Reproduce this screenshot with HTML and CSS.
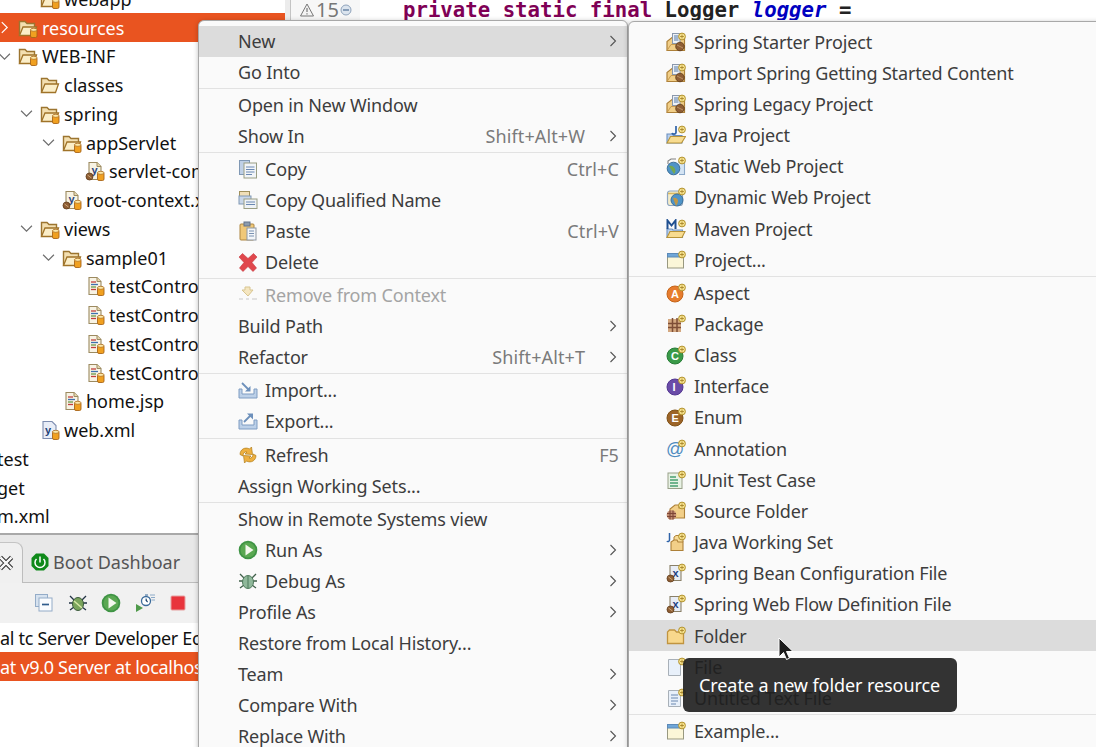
FILE: index.html
```html
<!DOCTYPE html>
<html lang="en">
<head>
  <meta charset="UTF-8">
  <title>Eclipse context menu</title>
  <link rel="stylesheet" href="styles.css">
</head>
<body>
  <!-- icon sprite -->
  <svg class="sprite" xmlns="http://www.w3.org/2000/svg">
    <defs>
      <g id="jar"><rect x="12.5" y="11" width="6.500" height="8.500" rx="1.5" fill="#f0a020" stroke="#a8651a" stroke-width=".9"/><ellipse cx="15.750" cy="11.800" rx="3.200" ry="1.500" fill="#fde9a8" stroke="#a8651a" stroke-width=".7"/></g>
      <g id="star"><circle cx="16" cy="4.5" r="3.4" fill="#f8e490" stroke="#b0902c" stroke-width="1"/><path d="M16 2.600v3.800M14.100 4.500h3.800" stroke="#a8862a" stroke-width=".9"/></g>
      <g id="bean"><circle cx="4.5" cy="15.5" r="3.500" fill="#8f5e34" stroke="#5e3a18" stroke-width=".8"/><path d="M2.500 14l4 3" stroke="#d8b888" stroke-width=".8"/></g>
      <g id="page"><path d="M4 1.5h8l4 4v13H4z" fill="#f8f3e4" stroke="#9c8a60" stroke-width="1.100"/><path d="M12 1.5v4h4" fill="#e6d8b0" stroke="#9c8a60"/></g>
    </defs>
    <symbol id="i-fopen" viewBox="0 0 20 20"><path d="M1.500 17.500V3.500h5.500l2 2h7.500V9" fill="#f3dfb0" stroke="#9c7530" stroke-width="1.400"/><path d="M1.500 17.500l3.500-8.500h13.500l-3 8.500z" fill="#fbeec8" stroke="#a07328" stroke-width="1.300"/></symbol>
    <symbol id="i-fopen-jar" viewBox="0 0 20 20"><use href="#i-fopen"/><use href="#jar"/></symbol>
    <symbol id="i-sxml" viewBox="0 0 20 20"><use href="#page"/><text x="6.500" y="13" class="ico-text" fill="#2b4580">y</text><use href="#bean"/><use href="#jar"/></symbol>
    <symbol id="i-jsp" viewBox="0 0 20 20"><use href="#page"/><path d="M6 6h5" stroke="#c0403d" stroke-width="1.300"/><path d="M6 8.500h7" stroke="#3f71b0" stroke-width="1.300"/><path d="M6 11h5" stroke="#6a9a4a" stroke-width="1.300"/><path d="M6 13.500h5" stroke="#c0403d" stroke-width="1.300"/><use href="#jar"/></symbol>
    <symbol id="i-xml" viewBox="0 0 20 20"><path d="M3 1.500h9l4 4v13H3z" fill="#e8edf7" stroke="#7d8db0" stroke-width="1.100"/><text x="5" y="14" class="ico-text" fill="#203f78">y</text><use href="#jar"/></symbol>

    <symbol id="i-copy" viewBox="0 0 20 20"><rect x="1.500" y="1.500" width="10" height="14" fill="#bfd0e6" stroke="#8098b4"/><rect x="6" y="4" width="12.500" height="15" fill="#f2f5f8" stroke="#9a9e84"/><path d="M8 8h8.500M8 10.500h8.500M8 13h8.500M8 15.500h6" stroke="#6a88b2"/></symbol>
    <symbol id="i-copyq" viewBox="0 0 20 20"><rect x="1.500" y="1.500" width="10" height="8" fill="#f0dfb8" stroke="#a0905c"/><rect x="1" y="6" width="12" height="8" fill="#c8d6e8" stroke="#8098b4"/><rect x="6" y="9" width="13" height="9.500" fill="#eef2f6" stroke="#9a9e84"/><path d="M8 12h9M8 14.500h9" stroke="#6a88b2"/></symbol>
    <symbol id="i-paste" viewBox="0 0 20 20"><rect x="2" y="3" width="14" height="16" rx="1" fill="#f0c878" stroke="#ae8640"/><rect x="6" y="1" width="6" height="4" fill="#8c9cae" stroke="#63738a"/><rect x="9" y="7" width="9" height="12" fill="#f3f6f9" stroke="#8e98a4"/><path d="M11 10h5M11 12.500h5M11 15h5" stroke="#7a92b2"/></symbol>
    <symbol id="i-delete" viewBox="0 0 20 20"><path d="M4.500 1.500L10 6.500l5.500-5L19 5 14 10.500 18.500 16 15 19.500 10 14.500l-5 5L1.500 16 6 10.500 1 5z" fill="#e0474c" stroke="#c6393f" stroke-width=".6"/></symbol>
    <symbol id="i-remove" viewBox="0 0 20 20"><path d="M7 2h5v3h3l-5 6-6-6h3z" fill="#f5e6c0" stroke="#d8c590"/><path d="M1 14h4M8 14h3M14 14h5" stroke="#c8c8c8" stroke-width="1.200"/></symbol>
    <symbol id="i-import" viewBox="0 0 20 20"><path d="M1 9h3v5h12V9h3v9H1z" fill="#bcd0e8" stroke="#7f9cc2"/><path d="M4 3l7 7" stroke="#6d90bb" stroke-width="1.800"/><path d="M12.500 6v5.500H7z" fill="#6d90bb"/></symbol>
    <symbol id="i-export" viewBox="0 0 20 20"><path d="M1 9h3v5h12V9h3v9H1z" fill="#bcd0e8" stroke="#7f9cc2"/><path d="M6 11l7-7" stroke="#6d90bb" stroke-width="1.800"/><path d="M9 2.500h6v6z" fill="#6d90bb"/></symbol>
    <symbol id="i-refresh" viewBox="0 0 20 20"><path d="M2 9.500c0-5 5-8 9.500-5.500l2-2 1 7.500-7.500-.500 2-2c-2.500-.500-4 1-4 4z" fill="#eeb040" stroke="#b07c18" stroke-width=".7"/><path d="M18 10.500c0 5-5 8-9.500 5.500l-2 2-1-7.500 7.500.500-2 2c2.500.500 4-1 4-4z" fill="#eeb040" stroke="#b07c18" stroke-width=".7"/></symbol>
    <symbol id="i-run" viewBox="0 0 20 20"><circle cx="10" cy="10" r="9.300" fill="#3f9445"/><circle cx="10" cy="10" r="7.500" fill="#5aa852"/><path d="M7.500 4.500l8 5.500-8 5.500z" fill="#f4f8ee"/></symbol>
    <symbol id="i-debug" viewBox="0 0 20 20"><path d="M2 3l4 4M18 3l-4 4M1 10h4M19 10h-4M2 17l4-3M18 17l-4-3" stroke="#40604a" stroke-width="1.300"/><ellipse cx="10" cy="11" rx="5.500" ry="6.500" fill="#8fb89a" stroke="#4f7a5c"/><path d="M10 5v12" stroke="#4f7a5c"/></symbol>
    <symbol id="i-debug2" viewBox="0 0 20 20"><path d="M2 3l4 4M18 3l-4 4M1 10h4M19 10h-4M2 17l4-3M18 17l-4-3" stroke="#234" stroke-width="1.300"/><ellipse cx="10" cy="11" rx="5.500" ry="6.500" fill="#7aa45c" stroke="#3a5a3c"/><path d="M6 8l8 7" stroke="#d8e8a8" stroke-width="1.500"/></symbol>
    <symbol id="i-profile" viewBox="0 0 20 20"><circle cx="11" cy="8" r="4.500" fill="#fff" stroke="#3b6b9b" stroke-width="1.300"/><path d="M11 5.500V8l2 1M10 2h3" stroke="#3b6b9b"/><path d="M1 11l7 4-7 4z" fill="#4f9a4a"/><path d="M15 2h5M16 4.500h4M16.500 7H20" stroke="#8caac8"/></symbol>
    <symbol id="i-stop" viewBox="0 0 20 20"><rect x="3" y="3" width="14" height="14" rx="1" fill="#e8343c" stroke="#e6a0a0"/></symbol>
    <symbol id="i-collapse" viewBox="0 0 20 20"><rect x="1.500" y="1.500" width="12" height="12" fill="#d6e2ef" stroke="#94acc8"/><rect x="5" y="5" width="13" height="13" fill="#fafcfe" stroke="#94acc8"/><path d="M8 11.500h7" stroke="#2f5c8c" stroke-width="1.700"/></symbol>
    <symbol id="i-boot" viewBox="0 0 20 20"><path d="M6 1.500h8l4.500 4.500v8L14 18.500H6L1.500 14V6z" fill="#0f8a1a"/><path d="M6.500 7a5 5 0 1 0 7 0" fill="none" stroke="#fff" stroke-width="1.500"/><path d="M10 4.500v6" stroke="#fff" stroke-width="1.500"/></symbol>
    <symbol id="i-close" viewBox="0 0 20 20"><path d="M3 3l14 14M17 3L3 17" stroke="#2a2a2a" stroke-width="5.500"/><path d="M3 3l14 14M17 3L3 17" stroke="#f8f8f8" stroke-width="3"/></symbol>

    <symbol id="n-spring" viewBox="0 0 20 20"><path d="M1 18.500V9.500l5-4h12.500v13z" fill="#f2cf88" stroke="#ad8038" stroke-width="1.200"/><path d="M1 18.500l4-6h14" fill="none" stroke="#c79a50"/><rect x="6.500" y="1.500" width="7.500" height="10" fill="#eef1f6" stroke="#8a98ac"/><path d="M8 4h4.500M8 6h4.500M8 8h4.500" stroke="#557aa8"/><circle cx="14" cy="14.500" r="4.300" fill="#8f5e34" stroke="#5e3a18" stroke-width=".8"/><path d="M11 13l6 3" stroke="#c8a070" stroke-width=".8"/><use href="#star"/></symbol>
    <symbol id="n-java" viewBox="0 0 20 20"><path d="M1 18V9h5l1.500 1.500H16V18z" fill="#b8d0ee" stroke="#6c90c0" stroke-width="1.100"/><path d="M1 18l3.500-6.500h15L15.500 18z" fill="#f8dc90" stroke="#b89438" stroke-width="1.100"/><path d="M10 1v6.500c0 2-3.500 2-4 .5" fill="none" stroke="#2e62a8" stroke-width="1.700"/><use href="#star"/></symbol>
    <symbol id="n-static" viewBox="0 0 20 20"><path d="M2 8V5l3-2h5" fill="none" stroke="#808080" stroke-width="1.100"/><path d="M12 6h6.500v12.500H13" fill="#d4e4f4" stroke="#8aa8c8" stroke-width="1.100"/><circle cx="7.500" cy="12.500" r="6.300" fill="#4f94c8" stroke="#3c6f98"/><path d="M3 10c3-1 5 1 6 3 1 2 0 4-1 5" fill="#74a850"/><use href="#star"/></symbol>
    <symbol id="n-dynamic" viewBox="0 0 20 20"><rect x="1.500" y="4" width="15" height="14.500" rx="2.500" fill="#f4ecc8" stroke="#8ea6c2" stroke-width="1.200"/><path d="M2 6.500h12" stroke="#d8b860" stroke-width="1.500"/><circle cx="11" cy="13" r="6" fill="#4f94c8" stroke="#3c6f98"/><path d="M7 11c3-1 5 1 5 3s-1 3-2 5" fill="#c09848"/><use href="#star"/></symbol>
    <symbol id="n-maven" viewBox="0 0 20 20"><path d="M1 18.500V10h5l1 1h9.500v7.500z" fill="#b8d0ee" stroke="#6c90c0" stroke-width="1.100"/><path d="M1 18.500l3-6h15l-3 6z" fill="#f8dc90" stroke="#b89438" stroke-width="1.100"/><path d="M1.500 10V1.500l4 5 4-5V10" fill="none" stroke="#1f4f90" stroke-width="2"/><use href="#star"/></symbol>
    <symbol id="n-project" viewBox="0 0 20 20"><rect x="1.500" y="3.500" width="16" height="14.500" fill="#fbf6d8" stroke="#989880"/><rect x="1.500" y="3.500" width="16" height="3.500" fill="#6fa6d8" stroke="#5c8ab8"/><use href="#star"/></symbol>
    <symbol id="n-aspect" viewBox="0 0 20 20"><circle cx="9" cy="11" r="8" fill="#e67c2e" stroke="#c46418"/><text x="5" y="15" class="ico-text" fill="#fff">A</text><use href="#star"/></symbol>
    <symbol id="n-package" viewBox="0 0 20 20"><path d="M2 5h13v13H2z" fill="#d4a880"/><path d="M2 9.500h13M2 13.500h13M6.500 4v14M11 4v14" stroke="#7e4e36" stroke-width="1.500"/><use href="#star"/></symbol>
    <symbol id="n-class" viewBox="0 0 20 20"><circle cx="9" cy="11" r="8" fill="#3a9a48" stroke="#287c36"/><text x="5" y="15" class="ico-text" fill="#fff">C</text><use href="#star"/></symbol>
    <symbol id="n-interface" viewBox="0 0 20 20"><circle cx="9" cy="11" r="8" fill="#6a4ca8" stroke="#523690"/><text x="6.500" y="15" class="ico-text" fill="#fff">I</text><use href="#star"/></symbol>
    <symbol id="n-enum" viewBox="0 0 20 20"><circle cx="9" cy="11" r="8" fill="#9c6428" stroke="#805014"/><text x="5.500" y="15" class="ico-text" fill="#fff">E</text><use href="#star"/></symbol>
    <symbol id="n-annotation" viewBox="0 0 20 20"><text x="0" y="16" class="ico-at" fill="#4f8cc0">@</text><use href="#star"/></symbol>
    <symbol id="n-junit" viewBox="0 0 20 20"><rect x="2" y="3" width="14" height="15.500" fill="#e8f2e4" stroke="#98a088"/><path d="M4 7h6M4 10h8M4 13h8M4 16h8" stroke="#48a070" stroke-width="1.400"/><use href="#star"/></symbol>
    <symbol id="n-source" viewBox="0 0 20 20"><path d="M4 17V8l5-4h4v3h5.500v10z" fill="#f2cf88" stroke="#ad8038" stroke-width="1.100"/><circle cx="5.500" cy="14" r="4.800" fill="#c08c70"/><path d="M1 12.500h9M1 15.500h9M4 9.500v9M7 9.500v9" stroke="#7e4636" stroke-width="1.100"/><use href="#star"/></symbol>
    <symbol id="n-jws" viewBox="0 0 20 20"><path d="M3.500 1v7c0 1.500-2 2-2.500 1" fill="none" stroke="#2e62a8" stroke-width="1.500"/><path d="M8 10V5l2-1.500h3l1 1.500h3v5" fill="#f8dc98" stroke="#ad8038"/><path d="M5 18.500V10l3-2h3l1 2h5v8.500z" fill="#f2cf88" stroke="#ad8038" stroke-width="1.100"/><use href="#star"/></symbol>
    <symbol id="n-bean" viewBox="0 0 20 20"><path d="M4 2.500h11v15H4z" fill="#e8edf6" stroke="#8a8068" stroke-width="1.100"/><text x="6.500" y="14" class="ico-text" fill="#1f4080">x</text><use href="#bean"/><use href="#star"/></symbol>
    <symbol id="n-folder" viewBox="0 0 20 20"><path d="M1.500 17.500V6l2-2h5l2 2h7v11.500z" fill="#f8d88c" stroke="#c09440" stroke-width="1.300"/><use href="#star"/></symbol>
    <symbol id="n-file" viewBox="0 0 20 20"><path d="M2.500 2.500h12v16h-12z" fill="#e8f0fa" stroke="#a8b0b8"/><use href="#star"/></symbol>
    <symbol id="n-text" viewBox="0 0 20 20"><path d="M2.500 2.500h12v16h-12z" fill="#e8f0fa" stroke="#a8b0b8"/><path d="M5 7h7M5 10h7M5 13h7M5 16h5" stroke="#6a88b0"/><use href="#star"/></symbol>

    <symbol id="chev-down" viewBox="0 0 12 12"><path d="M1 3.500l5 5 5-5" fill="none" stroke="#6e6e6e" stroke-width="1.100"/></symbol>
    <symbol id="chev-right" viewBox="0 0 12 12"><path d="M3.500 1l5 5-5 5" fill="none" stroke="currentColor" stroke-width="1.100"/></symbol>
  </svg>

  <div class="app">
    <div class="side">
      <div class="tree">
        <div class="tree-list">
          <div class="tree-row lv1"><svg class="ico"><use href="#i-fopen-jar"/></svg>webapp</div>
          <div class="tree-row lv0 selected"><svg class="twist"><use href="#chev-right"/></svg><svg class="ico"><use href="#i-fopen-jar"/></svg>resources</div>
          <div class="tree-row lv0"><svg class="twist"><use href="#chev-down"/></svg><svg class="ico"><use href="#i-fopen-jar"/></svg>WEB-INF</div>
          <div class="tree-row lv1"><svg class="ico"><use href="#i-fopen"/></svg>classes</div>
          <div class="tree-row lv1"><svg class="twist"><use href="#chev-down"/></svg><svg class="ico"><use href="#i-fopen-jar"/></svg>spring</div>
          <div class="tree-row lv2"><svg class="twist"><use href="#chev-down"/></svg><svg class="ico"><use href="#i-fopen-jar"/></svg>appServlet</div>
          <div class="tree-row lv3"><svg class="ico"><use href="#i-sxml"/></svg>servlet-con</div>
          <div class="tree-row lv2"><svg class="ico"><use href="#i-sxml"/></svg>root-context.x</div>
          <div class="tree-row lv1"><svg class="twist"><use href="#chev-down"/></svg><svg class="ico"><use href="#i-fopen-jar"/></svg>views</div>
          <div class="tree-row lv2"><svg class="twist"><use href="#chev-down"/></svg><svg class="ico"><use href="#i-fopen-jar"/></svg>sample01</div>
          <div class="tree-row lv3"><svg class="ico"><use href="#i-jsp"/></svg>testContro</div>
          <div class="tree-row lv3"><svg class="ico"><use href="#i-jsp"/></svg>testContro</div>
          <div class="tree-row lv3"><svg class="ico"><use href="#i-jsp"/></svg>testContro</div>
          <div class="tree-row lv3"><svg class="ico"><use href="#i-jsp"/></svg>testContro</div>
          <div class="tree-row lv2"><svg class="ico"><use href="#i-jsp"/></svg>home.jsp</div>
          <div class="tree-row lv1"><svg class="ico"><use href="#i-xml"/></svg>web.xml</div>
          <div class="tree-row clipped">test</div>
          <div class="tree-row clipped">get</div>
          <div class="tree-row clipped">m.xml</div>
        </div>
      </div>

      <div class="tabbar">
        <div class="tab-active"><svg class="tab-close"><use href="#i-close"/></svg></div>
        <div class="tab"><svg class="ico"><use href="#i-boot"/></svg>Boot Dashboar</div>
      </div>
      <div class="toolbar">
        <svg class="ico"><use href="#i-collapse"/></svg>
        <svg class="ico"><use href="#i-debug2"/></svg>
        <svg class="ico"><use href="#i-run"/></svg>
        <svg class="ico"><use href="#i-profile"/></svg>
        <svg class="ico"><use href="#i-stop"/></svg>
      </div>
      <div class="servers">
        <div class="server-row">al tc Server Developer Ec</div>
        <div class="server-row selected">at v9.0 Server at localhos</div>
      </div>
    </div>

    <div class="editor">
      <div class="gutter">
        <svg class="warn" viewBox="0 0 14 14"><path d="M7 1L13.500 13H.5z" fill="#f4f4f4" stroke="#777"/><path d="M7 5v4M7 10.200v1.200" stroke="#777" stroke-width="1.200"/></svg>
        <span class="line-no">15</span>
        <svg class="fold" viewBox="0 0 12 12"><circle cx="6" cy="6" r="5" fill="#dbe4ee" stroke="#8fa3bb"/><path d="M3 6h6" stroke="#4e6f94" stroke-width="1.200"/></svg>
      </div>
      <pre class="code"><span class="kw">private static final</span> Logger <span class="field">logger</span> =</pre>
    </div>

    <div class="menu menu-main">
      <div class="item active"><span class="label">New</span><svg class="arrow"><use href="#chev-right"/></svg></div>
      <div class="item"><span class="label">Go Into</span></div>
      <div class="sep"></div>
      <div class="item"><span class="label">Open in New Window</span></div>
      <div class="item"><span class="label">Show In</span><span class="accel with-arrow">Shift+Alt+W</span><svg class="arrow"><use href="#chev-right"/></svg></div>
      <div class="sep"></div>
      <div class="item"><svg class="ico"><use href="#i-copy"/></svg><span class="label">Copy</span><span class="accel">Ctrl+C</span></div>
      <div class="item"><svg class="ico"><use href="#i-copyq"/></svg><span class="label">Copy Qualified Name</span></div>
      <div class="item"><svg class="ico"><use href="#i-paste"/></svg><span class="label">Paste</span><span class="accel">Ctrl+V</span></div>
      <div class="item"><svg class="ico"><use href="#i-delete"/></svg><span class="label">Delete</span></div>
      <div class="sep"></div>
      <div class="item disabled"><svg class="ico"><use href="#i-remove"/></svg><span class="label">Remove from Context</span></div>
      <div class="item"><span class="label">Build Path</span><svg class="arrow"><use href="#chev-right"/></svg></div>
      <div class="item"><span class="label">Refactor</span><span class="accel with-arrow">Shift+Alt+T</span><svg class="arrow"><use href="#chev-right"/></svg></div>
      <div class="sep"></div>
      <div class="item"><svg class="ico"><use href="#i-import"/></svg><span class="label">Import...</span></div>
      <div class="item"><svg class="ico"><use href="#i-export"/></svg><span class="label">Export...</span></div>
      <div class="sep"></div>
      <div class="item"><svg class="ico"><use href="#i-refresh"/></svg><span class="label">Refresh</span><span class="accel">F5</span></div>
      <div class="item"><span class="label">Assign Working Sets...</span></div>
      <div class="sep"></div>
      <div class="item"><span class="label">Show in Remote Systems view</span></div>
      <div class="item"><svg class="ico"><use href="#i-run"/></svg><span class="label">Run As</span><svg class="arrow"><use href="#chev-right"/></svg></div>
      <div class="item"><svg class="ico"><use href="#i-debug"/></svg><span class="label">Debug As</span><svg class="arrow"><use href="#chev-right"/></svg></div>
      <div class="item"><span class="label">Profile As</span><svg class="arrow"><use href="#chev-right"/></svg></div>
      <div class="item"><span class="label">Restore from Local History...</span></div>
      <div class="item"><span class="label">Team</span><svg class="arrow"><use href="#chev-right"/></svg></div>
      <div class="item"><span class="label">Compare With</span><svg class="arrow"><use href="#chev-right"/></svg></div>
      <div class="item"><span class="label">Replace With</span><svg class="arrow"><use href="#chev-right"/></svg></div>
    </div>

    <div class="menu menu-sub">
      <div class="item"><svg class="ico"><use href="#n-spring"/></svg><span class="label">Spring Starter Project</span></div>
      <div class="item"><svg class="ico"><use href="#n-spring"/></svg><span class="label">Import Spring Getting Started Content</span></div>
      <div class="item"><svg class="ico"><use href="#n-spring"/></svg><span class="label">Spring Legacy Project</span></div>
      <div class="item"><svg class="ico"><use href="#n-java"/></svg><span class="label">Java Project</span></div>
      <div class="item"><svg class="ico"><use href="#n-static"/></svg><span class="label">Static Web Project</span></div>
      <div class="item"><svg class="ico"><use href="#n-dynamic"/></svg><span class="label">Dynamic Web Project</span></div>
      <div class="item"><svg class="ico"><use href="#n-maven"/></svg><span class="label">Maven Project</span></div>
      <div class="item"><svg class="ico"><use href="#n-project"/></svg><span class="label">Project...</span></div>
      <div class="sep"></div>
      <div class="item"><svg class="ico"><use href="#n-aspect"/></svg><span class="label">Aspect</span></div>
      <div class="item"><svg class="ico"><use href="#n-package"/></svg><span class="label">Package</span></div>
      <div class="item"><svg class="ico"><use href="#n-class"/></svg><span class="label">Class</span></div>
      <div class="item"><svg class="ico"><use href="#n-interface"/></svg><span class="label">Interface</span></div>
      <div class="item"><svg class="ico"><use href="#n-enum"/></svg><span class="label">Enum</span></div>
      <div class="item"><svg class="ico"><use href="#n-annotation"/></svg><span class="label">Annotation</span></div>
      <div class="item"><svg class="ico"><use href="#n-junit"/></svg><span class="label">JUnit Test Case</span></div>
      <div class="item"><svg class="ico"><use href="#n-source"/></svg><span class="label">Source Folder</span></div>
      <div class="item"><svg class="ico"><use href="#n-jws"/></svg><span class="label">Java Working Set</span></div>
      <div class="item"><svg class="ico"><use href="#n-bean"/></svg><span class="label">Spring Bean Configuration File</span></div>
      <div class="item"><svg class="ico"><use href="#n-bean"/></svg><span class="label">Spring Web Flow Definition File</span></div>
      <div class="item active"><svg class="ico"><use href="#n-folder"/></svg><span class="label">Folder</span></div>
      <div class="item"><svg class="ico"><use href="#n-file"/></svg><span class="label">File</span></div>
      <div class="item"><svg class="ico"><use href="#n-text"/></svg><span class="label">Untitled Text File</span></div>
      <div class="sep"></div>
      <div class="item"><svg class="ico"><use href="#n-project"/></svg><span class="label">Example...</span></div>
    </div>

    <div class="tooltip">Create a new folder resource</div>
    <svg class="pointer" viewBox="0 0 16 24"><path d="M1 1v19l4.500-4.500 3 7 3-1.300-3-6.700h6.500z" fill="#1c1c1c" stroke="#fff" stroke-width="1"/></svg>
  </div>
</body>
</html>
```

FILE: styles.css
```css
html, body {
  margin: 0;
  height: 100%;
  overflow: hidden;
  background-color: #fff;
}

body {
  font-family: "Noto Sans", sans-serif;
  font-size: 18px;
  color: #111;
}

.sprite {
  display: none;
}

.ico-text {
  font-family: "Liberation Sans", sans-serif;
  font-size: 11px;
  font-weight: bold;
}

.ico-at {
  font-family: "Liberation Sans", sans-serif;
  font-size: 18px;
}

.app {
  position: relative;
  display: flex;
  width: 1096px;
  height: 747px;
  overflow: hidden;
}

/* left column */
.side {
  display: flex;
  flex-direction: column;
  flex: none;
  width: 285px;
  overflow: hidden;
}

.tree {
  flex: none;
  height: 533px;
  overflow: hidden;
}

.tree-list {
  margin-top: -15.500px;
}

.tree-row {
  display: flex;
  align-items: center;
  height: 28.750px;
  white-space: nowrap;
}

.lv0 { padding-left: 18px; }
.lv1 { padding-left: 40px; }
.lv2 { padding-left: 62px; }
.lv3 { padding-left: 85px; }

.clipped {
  margin-left: -3px;
}

.selected {
  background-color: #e95420;
  color: #fff;
}

.ico {
  flex: none;
  width: 20px;
  height: 20px;
  margin-right: 4px;
}

.twist {
  flex: none;
  width: 13px;
  height: 13px;
  margin-left: -20px;
  margin-right: 7px;
}

.tabbar {
  display: flex;
  flex: none;
  height: 47px;
  align-items: flex-end;
  border-top: 2px solid #a9a9a9;
  border-bottom: 1px solid #bdbdbd;
  background-color: #e8e8e8;
}

.tab-active {
  display: flex;
  align-items: center;
  flex: none;
  box-sizing: border-box;
  width: 23px;
  height: 41px;
  margin-bottom: -1px;
  border-top: 1px solid #c4c4c4;
  border-right: 1px solid #bdbdbd;
  border-top-right-radius: 8px;
  background-color: #f0f0f0;
}

.tab-close {
  width: 16px;
  height: 16px;
  margin-left: -2px;
}

.tab {
  display: flex;
  align-items: center;
  height: 40px;
  padding-left: 7px;
  color: #555;
}

.tab .ico {
  margin-right: 3px;
}

.toolbar {
  display: flex;
  align-items: center;
  gap: 9.500px;
  flex: none;
  height: 40px;
  padding-left: 34px;
  background-color: #f1f1f1;
}

.server-row {
  display: flex;
  align-items: center;
  height: 29px;
  letter-spacing: -0.300px;
  white-space: nowrap;
}

/* editor strip */
.editor {
  display: flex;
  flex: 1;
  height: 20px;
  overflow: hidden;
  border-left: 5px solid #ececec;
}

.gutter {
  display: flex;
  align-items: center;
  flex: none;
  width: 60px;
  padding-left: 9px;
  border-left: 1px solid #c4c4c4;
  background-color: #f7f7f7;
  color: #777;
}

.warn {
  flex: none;
  width: 14px;
  height: 14px;
}

.line-no {
  margin-left: 2px;
  font-size: 20px;
  line-height: 20px;
}

.fold {
  flex: none;
  width: 12px;
  height: 12px;
  margin-left: 1px;
}

.code {
  margin: -2.500px 0 0 43px;
  font-family: "DejaVu Sans Mono", monospace;
  font-size: 20.700px;
  font-weight: bold;
  line-height: 24px;
  color: #222;
}

.kw {
  color: #7f0055;
}

.field {
  font-style: italic;
  color: #0000c0;
}

/* popup menus */
.menu {
  position: absolute;
  box-sizing: border-box;
  color: #3d3d3d;
  background-color: #fafafa;
  border: 1px solid #a8a8a8;
  border-radius: 6px 6px 0 0;
  box-shadow: 0 1px 5px rgba(0, 0, 0, 0.25);
}

.menu-main {
  top: 20px;
  left: 198px;
  width: 430px;
  height: 740px;
  padding-top: 4.800px;
}

.menu-sub {
  top: 21px;
  left: 628px;
  width: 480px;
  height: 740px;
  padding-top: 4px;
}

.item {
  display: flex;
  align-items: center;
  box-sizing: border-box;
  height: 31.170px;
  padding-left: 39px;
  padding-right: 8px;
  white-space: nowrap;
}

.menu-main .item {
  height: 31.030px;
}

.menu-sub .item {
  padding-left: 37px;
}

.menu-sub .ico {
  margin-right: 8px;
}

.menu-main .ico {
  margin-right: 7px;
}

.item.active {
  background-color: #dcdcdc;
}

.item.disabled {
  color: #a4a4a4;
}

.label {
  flex: 1;
  letter-spacing: -0.150px;
}

.accel {
  color: #7a7a7a;
  letter-spacing: 0.100px;
}

.accel.with-arrow {
  margin-right: 22px;
}

.arrow {
  flex: none;
  width: 12px;
  height: 12px;
  margin-right: 0;
  color: #555;
}

.sep {
  height: 1px;
  margin: 0.500px 0;
  background-color: #e2e2e2;
}

.tooltip {
  position: absolute;
  top: 658px;
  left: 683px;
  box-sizing: border-box;
  width: 274px;
  height: 54px;
  padding-left: 16px;
  line-height: 54px;
  letter-spacing: -0.080px;
  border-radius: 6px;
  background-color: rgba(31, 31, 31, 0.91);
  color: #fff;
  white-space: nowrap;
}

.pointer {
  position: absolute;
  top: 637px;
  left: 778px;
  width: 16px;
  height: 24px;
}
```
